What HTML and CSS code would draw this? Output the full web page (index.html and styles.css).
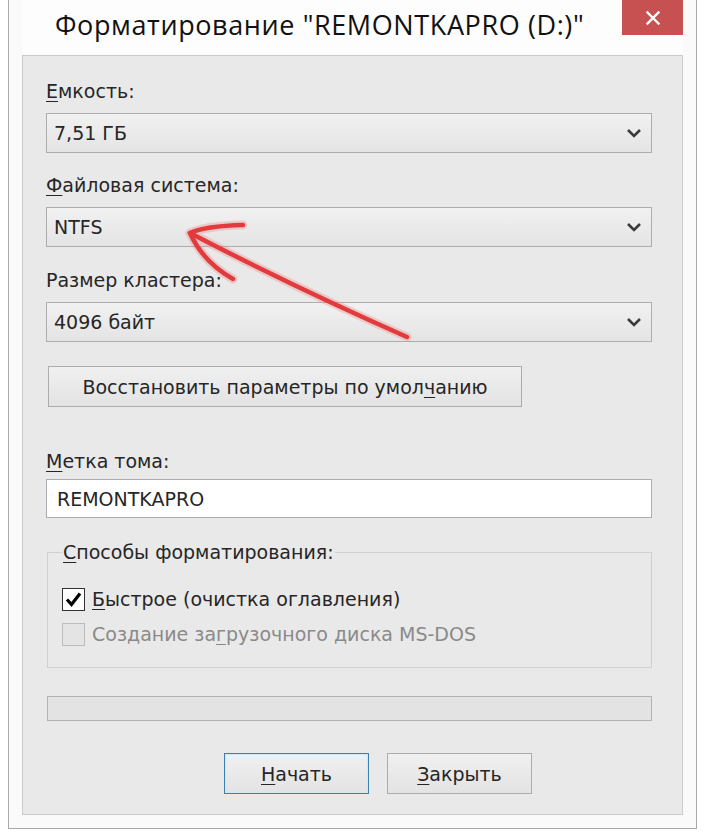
FILE: index.html
```html
<!DOCTYPE html>
<html lang="ru">
<head>
<meta charset="utf-8">
<title>Форматирование</title>
<link rel="stylesheet" href="styles.css">
</head>
<body>
<div class="window">
  <div class="titlebar">
    <div class="title">Форматирование "REMONTKAPRO (D:)"</div>
    <div class="close">
      <svg width="16" height="16" viewBox="0 0 16 16"><path d="M2.5 2.5 L13.5 13.5 M13.5 2.5 L2.5 13.5" stroke="#fff" stroke-width="2.4" stroke-linecap="square"/></svg>
    </div>
  </div>
  <div class="panel">
    <div class="label first"><u>Е</u>мкость:</div>
    <div class="combo"><span>7,51 ГБ</span><svg class="chev" width="16" height="10" viewBox="0 0 16 10"><path d="M2 2 L8 8 L14 2" fill="none" stroke="#3a3a3a" stroke-width="2.6"/></svg></div>
    <div class="label"><u>Ф</u>айловая система:</div>
    <div class="combo"><span>NTFS</span><svg class="chev" width="16" height="10" viewBox="0 0 16 10"><path d="M2 2 L8 8 L14 2" fill="none" stroke="#3a3a3a" stroke-width="2.6"/></svg></div>
    <div class="label third">Размер кластера:</div>
    <div class="combo"><span>4096 байт</span><svg class="chev" width="16" height="10" viewBox="0 0 16 10"><path d="M2 2 L8 8 L14 2" fill="none" stroke="#3a3a3a" stroke-width="2.6"/></svg></div>
    <div class="btn restore">Восстановить параметры по умол<u>ч</u>анию</div>
    <div class="label vol"><u>М</u>етка тома:</div>
    <div class="textbox">REMONTKAPRO</div>
    <fieldset class="group">
      <legend><u>С</u>пособы форматирования:</legend>
      <div class="check-row first-row">
        <span class="cb checked"><svg width="21" height="21" viewBox="0 0 21 21"><path d="M4 10.5 L8.5 15.5 L17 4.5" fill="none" stroke="#000" stroke-width="3.2"/></svg></span>
        <span><u>Б</u>ыстрое (очистка оглавления)</span>
      </div>
      <div class="check-row disabled">
        <span class="cb"></span>
        <span>Создание за<u>г</u>рузочного диска MS-DOS</span>
      </div>
    </fieldset>
    <div class="progress"></div>
    <div class="actions">
      <div class="btn action primary"><u>Н</u>ачать</div>
      <div class="btn action"><u>З</u>акрыть</div>
    </div>
  </div>
</div>
<svg class="arrow" width="704" height="832" viewBox="0 0 704 832">
  <g fill="none" stroke="#f08a8a" stroke-width="9" stroke-linecap="round" opacity="0.35">
    <path d="M190 233 Q 290 285 407 337"/>
    <path d="M190 233 Q 205 226 243 225"/>
    <path d="M190 233 Q 203 262 233 279"/>
  </g>
  <g fill="none" stroke="#e23b3e" stroke-width="4.5" stroke-linecap="round">
    <path d="M190 233 Q 290 285 407 337"/>
    <path d="M190 233 Q 205 226 243 225"/>
    <path d="M190 233 Q 203 262 233 279"/>
  </g>
</svg>
</body>
</html>
```
FILE: styles.css
```css
html, body {
  margin: 0;
  padding: 0;
  background: #ffffff;
}
body {
  width: 704px;
  height: 832px;
  position: relative;
  overflow: hidden;
  font-family: "DejaVu Sans", sans-serif;
  font-size: 19px;
  color: #262626;
}
u {
  text-decoration-thickness: 1px;
  text-underline-offset: 3px;
}
.window {
  margin-left: 8px;
  width: 689px;
  box-sizing: border-box;
  border-left: 1px solid #a9a9a9;
  border-right: 1px solid #a9a9a9;
  border-bottom: 1px solid #a9a9a9;
  background: #fafafa;
  padding: 0 13px 13px 13px;
}
.titlebar {
  height: 55px;
  display: flex;
  justify-content: space-between;
  align-items: flex-start;
  background: #fdfdfd;
}
.title {
  font-family: "Open Sans", "Noto Sans", sans-serif;
  font-size: 27px;
  letter-spacing: 0.6px;
  line-height: 36px;
  padding-top: 7px;
  padding-left: 33px;
  color: #111;
  white-space: nowrap;
}
.close {
  width: 61px;
  height: 35px;
  background: #c75050;
  display: flex;
  align-items: center;
  justify-content: center;
}
.panel {
  border: 1px solid #cbcbcb;
  background: #e9e9e9;
  padding: 23px 30px 20px 23px;
}
.label {
  height: 24px;
  line-height: 24px;
  margin-top: 20px;
  white-space: nowrap;
}
.label.first { margin-top: 0; }
.label.third { margin-top: 21px; }
.label.vol { margin-top: 42px; }
.combo {
  margin-top: 10px;
  height: 40px;
  box-sizing: border-box;
  border: 1px solid #adadad;
  background: linear-gradient(#f1f1f1, #e4e4e4);
  display: flex;
  align-items: center;
  justify-content: space-between;
  padding: 0 9px 0 7px;
}
.chev { display: block; }
.btn {
  box-sizing: border-box;
  border: 1px solid #acacac;
  background: linear-gradient(#f0f0f0, #e3e3e3);
  display: flex;
  align-items: center;
  justify-content: center;
  white-space: nowrap;
}
.restore {
  margin-top: 24px;
  margin-left: 2px;
  width: 474px;
  height: 41px;
}
.textbox {
  margin-top: 6px;
  height: 39px;
  box-sizing: border-box;
  border: 1px solid #abadb3;
  background: #ffffff;
  display: flex;
  align-items: center;
  padding-left: 10px;
}
.group {
  margin: 22px 0 0 1px;
  width: 605px;
  box-sizing: border-box;
  border: 1px solid #d0d0d0;
  padding: 0 14px 21px 14px;
}
.group legend {
  padding: 0 1px;
  height: 24px;
  line-height: 24px;
}
.check-row {
  display: flex;
  align-items: center;
  gap: 7px;
  height: 24px;
  margin-top: 11px;
  white-space: nowrap;
}
.check-row.first-row { margin-top: 23px; }
.cb {
  width: 23px;
  height: 23px;
  box-sizing: border-box;
  border: 1px solid #bcbcbc;
  background: #e4e4e4;
  display: flex;
  align-items: center;
  justify-content: center;
}
.cb.checked {
  border-color: #333;
  background: #ffffff;
}
.check-row.disabled { color: #8a8a8a; }
.progress {
  margin: 28px 0 0 1px;
  width: 605px;
  height: 25px;
  box-sizing: border-box;
  border: 1px solid #b2b2b2;
  background: #e3e3e3;
}
.actions {
  margin-top: 32px;
  display: flex;
  gap: 18px;
  padding-left: 178px;
}
.action {
  width: 145px;
  height: 41px;
}
.action.primary {
  border-color: #3c7fb1;
  box-shadow: inset 0 0 0 1px #cfe8f8;
}
.arrow {
  position: absolute;
  left: 0;
  top: 0;
  pointer-events: none;
}
```
